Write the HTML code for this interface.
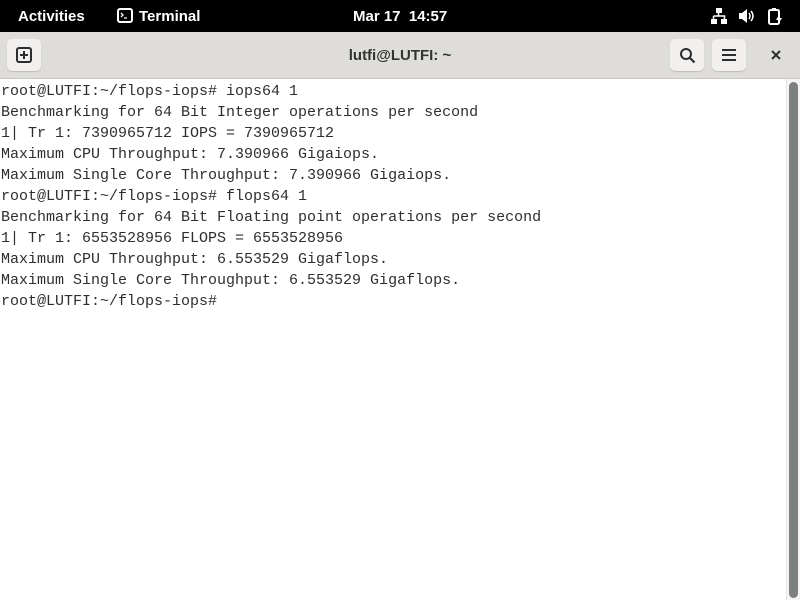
<!DOCTYPE html>
<html><head><style>
*{margin:0;padding:0;box-sizing:border-box}
body{width:800px;height:600px;overflow:hidden;background:#fff;font-family:"Liberation Sans",sans-serif;position:relative}
#top{position:absolute;left:0;top:0;width:800px;height:32px;background:#000;color:#fff;font-size:15px;font-weight:bold}
#top span{position:absolute;top:8px}
#hdr{position:absolute;left:0;top:32px;width:800px;height:47px;background:#deddda;border-bottom:1px solid #c8c5c2}
.btn{position:absolute;top:7px;width:34px;height:32px;background:#f1f0ee;border-radius:5px;box-shadow:0 1px 1px rgba(0,0,0,.15)}
#title{position:absolute;top:15px;left:0;width:800px;text-align:center;font-size:15px;font-weight:bold;color:#333}
#term{position:absolute;left:1px;top:81px;font-family:"Liberation Mono",monospace;font-size:15px;line-height:21px;color:#2e2e2e;white-space:pre}
#sb{position:absolute;left:789px;top:82px;width:9px;height:516px;background:#7c807f;border-radius:5px}
#sbt{position:absolute;left:786px;top:79px;width:14px;height:521px;background:#f6f5f4;border-left:1px solid #e5e5e5}
</style></head><body>
<div id="top">
<span style="left:18px">Activities</span>
<svg style="position:absolute;left:117px;top:8px" width="16" height="15" viewBox="0 0 16 15"><rect x="1" y="1" width="14" height="13" rx="2" fill="none" stroke="#fff" stroke-width="2"/><path d="M4 5l2 2-2 2M7 10h3" stroke="#fff" stroke-width="1.3" fill="none"/></svg>
<span style="left:139px">Terminal</span>
<span style="left:353px">Mar 17&nbsp; 14:57</span>
<svg style="position:absolute;left:710px;top:7px" width="18" height="18" viewBox="0 0 18 18" fill="#fff"><rect x="6" y="1" width="6" height="5"/><rect x="1" y="12" width="6" height="5"/><rect x="11" y="12" width="6" height="5"/><path d="M8.5 6v3M3.5 9h11v3M3.5 9v3" stroke="#fff" stroke-width="1.5" fill="none"/></svg>
<svg style="position:absolute;left:738px;top:8px" width="18" height="16" viewBox="0 0 18 16" fill="#fff"><path d="M1 5h3l5-4v14l-5-4H1z"/><path d="M11 5q2 3 0 6M13 3q4 5 0 10" stroke="#fff" stroke-width="1.5" fill="none"/></svg>
<svg style="position:absolute;left:767px;top:7px" width="16" height="18" viewBox="0 0 16 18"><rect x="2" y="3" width="10" height="14" rx="1.5" fill="none" stroke="#fff" stroke-width="2"/><rect x="5" y="1" width="4" height="2" fill="#fff"/><path d="M12 8l-3 5h3l-1 4 4-6h-3z" fill="#fff"/></svg>
</div>
<div id="hdr">
<div class="btn" style="left:7px"><svg style="position:absolute;left:9px;top:8px" width="16" height="16" viewBox="0 0 16 16"><rect x="1" y="1" width="14" height="14" rx="2" fill="none" stroke="#2e2e2e" stroke-width="2"/><path d="M8 4v8M4 8h8" stroke="#2e2e2e" stroke-width="2"/></svg></div>
<div id="title">lutfi@LUTFI: ~</div>
<div class="btn" style="left:670px"><svg style="position:absolute;left:9px;top:8px" width="17" height="17" viewBox="0 0 17 17"><circle cx="7" cy="7" r="5" fill="none" stroke="#2e2e2e" stroke-width="2"/><path d="M10.5 10.5l5 5" stroke="#2e2e2e" stroke-width="2.2"/></svg></div>
<div class="btn" style="left:712px"><svg style="position:absolute;left:9px;top:9px" width="16" height="14" viewBox="0 0 16 14"><path d="M1 2h14M1 7h14M1 12h14" stroke="#2e2e2e" stroke-width="2"/></svg></div>
<svg style="position:absolute;left:771px;top:18px" width="10" height="10" viewBox="0 0 10 10"><path d="M1 1l8 8M9 1l-8 8" stroke="#2e2e2e" stroke-width="2"/></svg>
</div>
<div id="term">root@LUTFI:~/flops-iops# iops64 1
Benchmarking for 64 Bit Integer operations per second
1| Tr 1: 7390965712 IOPS = 7390965712
Maximum CPU Throughput: 7.390966 Gigaiops.
Maximum Single Core Throughput: 7.390966 Gigaiops.
root@LUTFI:~/flops-iops# flops64 1
Benchmarking for 64 Bit Floating point operations per second
1| Tr 1: 6553528956 FLOPS = 6553528956
Maximum CPU Throughput: 6.553529 Gigaflops.
Maximum Single Core Throughput: 6.553529 Gigaflops.
root@LUTFI:~/flops-iops# </div>
<div id="sbt"></div><div id="sb"></div>
</body></html>
